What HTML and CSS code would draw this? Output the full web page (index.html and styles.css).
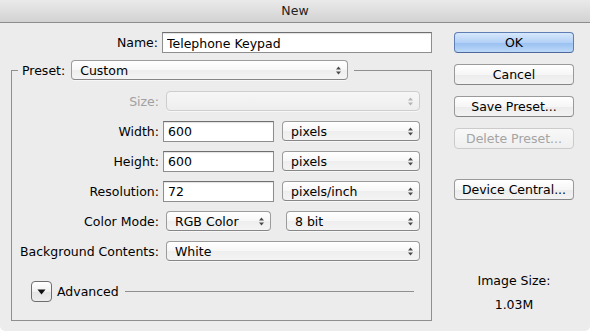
FILE: index.html
```html
<!DOCTYPE html>
<html lang="en">
<head>
    <meta charset="UTF-8">
    <title>New</title>
    <link rel="stylesheet" href="styles.css">
</head>
<body>
    <div class="window">
        <div class="titlebar">New</div>
        <div class="dialog">
            <div class="main">
                <div class="name-row">
                    <label class="label">Name:</label>
                    <input class="field name-field" type="text" value="Telephone Keypad">
                </div>

                <fieldset class="preset-box">
                    <legend class="preset-legend">
                        <span>Preset:</span>
                        <div class="popup preset-popup">Custom<svg class="arrows" width="7" height="9" viewBox="0 0 7 9"><path d="M3.5 0.5 L6 3.5 L1 3.5 Z M3.5 8.5 L6 5.5 L1 5.5 Z"/></svg></div>
                    </legend>

                    <div class="row">
                        <span class="label muted">Size:</span>
                        <div class="popup wide disabled"><svg class="arrows" width="7" height="9" viewBox="0 0 7 9"><path d="M3.5 0.5 L6 3.5 L1 3.5 Z M3.5 8.5 L6 5.5 L1 5.5 Z"/></svg></div>
                    </div>
                    <div class="row">
                        <span class="label">Width:</span>
                        <input class="field num-field" type="text" value="600">
                        <div class="popup unit">pixels<svg class="arrows" width="7" height="9" viewBox="0 0 7 9"><path d="M3.5 0.5 L6 3.5 L1 3.5 Z M3.5 8.5 L6 5.5 L1 5.5 Z"/></svg></div>
                    </div>
                    <div class="row">
                        <span class="label">Height:</span>
                        <input class="field num-field" type="text" value="600">
                        <div class="popup unit">pixels<svg class="arrows" width="7" height="9" viewBox="0 0 7 9"><path d="M3.5 0.5 L6 3.5 L1 3.5 Z M3.5 8.5 L6 5.5 L1 5.5 Z"/></svg></div>
                    </div>
                    <div class="row">
                        <span class="label">Resolution:</span>
                        <input class="field num-field" type="text" value="72">
                        <div class="popup unit">pixels/inch<svg class="arrows" width="7" height="9" viewBox="0 0 7 9"><path d="M3.5 0.5 L6 3.5 L1 3.5 Z M3.5 8.5 L6 5.5 L1 5.5 Z"/></svg></div>
                    </div>
                    <div class="row row-mode">
                        <span class="label">Color Mode:</span>
                        <div class="popup mode">RGB Color<svg class="arrows" width="7" height="9" viewBox="0 0 7 9"><path d="M3.5 0.5 L6 3.5 L1 3.5 Z M3.5 8.5 L6 5.5 L1 5.5 Z"/></svg></div>
                        <div class="popup depth">8 bit<svg class="arrows" width="7" height="9" viewBox="0 0 7 9"><path d="M3.5 0.5 L6 3.5 L1 3.5 Z M3.5 8.5 L6 5.5 L1 5.5 Z"/></svg></div>
                    </div>
                    <div class="row">
                        <span class="label">Background Contents:</span>
                        <div class="popup wide">White<svg class="arrows" width="7" height="9" viewBox="0 0 7 9"><path d="M3.5 0.5 L6 3.5 L1 3.5 Z M3.5 8.5 L6 5.5 L1 5.5 Z"/></svg></div>
                    </div>

                    <!-- Advanced disclosure -->
                    <div class="advanced">
                        <div class="disclosure"><svg width="9" height="6" viewBox="0 0 9 6"><path d="M0.5 0.5 L8.5 0.5 L4.5 5.5 Z"/></svg></div>
                        <span>Advanced</span>
                        <div class="rule"></div>
                    </div>
                </fieldset>
            </div>

            <div class="side">
                <button class="btn btn-default">OK</button>
                <button class="btn">Cancel</button>
                <button class="btn">Save Preset...</button>
                <button class="btn" disabled>Delete Preset...</button>
                <button class="btn btn-central">Device Central...</button>
                <div class="image-size">
                    <div>Image Size:</div>
                    <div class="size-value">1.03M</div>
                </div>
            </div>
        </div>
    </div>
</body>
</html>
```

FILE: styles.css
```css
body {
    margin: 0;
    padding: 0;
    background-color: #ffffff;
    font-family: "DejaVu Sans", sans-serif;
    font-size: 12.5px;
    color: #000000;
}

.window {
    width: 590px;
    height: 331px;
    background-color: #ececec;
    border-radius: 0 0 5px 5px;
    overflow: hidden;
}

.titlebar {
    height: 22px;
    line-height: 22px;
    text-align: center;
    font-size: 12.5px;
    color: #222222;
    background: linear-gradient(#eaeaea, #d2d2d2);
    border-bottom: 1px solid #8c8c8c;
}

.dialog {
    display: flex;
    padding-top: 9px;
}

.main {
    margin-left: 11px;
    width: 421px;
}

.name-row {
    display: flex;
    align-items: center;
    height: 21px;
}

.label {
    width: 147px;
    flex-shrink: 0;
    text-align: right;
    white-space: nowrap;
}

.muted {
    color: #a0a0a0;
}

.field {
    box-sizing: border-box;
    height: 21px;
    margin: 0 0 0 4px;
    padding: 1px 4px 0;
    border: 1px solid #8e8e8e;
    border-top-color: #6f6f6f;
    box-shadow: inset 0 1px 1px rgba(0, 0, 0, 0.12);
    background-color: #ffffff;
    font-family: "DejaVu Sans", sans-serif;
    font-size: 12.5px;
    color: #000000;
    outline: none;
}

.name-field {
    width: 270px;
}

.num-field {
    width: 111px;
}

/* Fieldset with the preset popup sitting on its top line */
.preset-box {
    margin: 7px 0 0;
    padding: 11px 11px 18px 0;
    border: 1px solid #8f8f8f;
    min-width: 0;
}

.preset-legend {
    display: flex;
    align-items: center;
    margin-left: 6px;
    padding: 0 6px 0 4px;
    height: 20px;
}

.preset-legend span {
    margin-right: 6px;
}

.popup {
    position: relative;
    box-sizing: border-box;
    display: flex;
    align-items: center;
    height: 20px;
    padding-left: 8px;
    border: 1px solid #9c9c9c;
    border-bottom-color: #868686;
    border-radius: 4px;
    background: linear-gradient(#ffffff, #f7f7f7 50%, #eeeeee 51%, #f4f4f4);
    box-shadow: 0 1px 0 rgba(255, 255, 255, 0.6);
    white-space: nowrap;
}

.popup .arrows {
    position: absolute;
    right: 5px;
    top: 5px;
    fill: #4a4a4a;
}

.popup.disabled {
    border-color: #cdcdcd;
    background: linear-gradient(#f6f6f6, #eeeeee);
}

.popup.disabled .arrows {
    fill: #b4b4b4;
}

.preset-popup {
    width: 277px;
}

.row {
    display: flex;
    align-items: center;
    height: 20px;
    margin-bottom: 10px;
}

.row-mode {
    margin-top: 1px;
}

.wide {
    width: 254px;
    margin-left: 7px;
}

.unit {
    width: 138px;
    margin-left: 8px;
}

.mode {
    width: 105px;
    margin-left: 7px;
}

.depth {
    width: 134px;
    margin-left: 15px;
}

.advanced {
    display: flex;
    align-items: center;
    height: 21px;
    margin-top: 20px;
    padding-left: 19px;
}

.disclosure {
    box-sizing: border-box;
    width: 21px;
    height: 21px;
    display: flex;
    align-items: center;
    justify-content: center;
    border: 1px solid #6e6e6e;
    border-radius: 4px;
    background: linear-gradient(#ffffff, #f1f1f1 50%, #e4e4e4 51%, #ededed);
}

.disclosure svg {
    fill: #111111;
    margin-top: 1px;
}

.advanced span {
    margin-left: 5px;
}

.rule {
    flex: 1;
    height: 1px;
    margin: 0 6px 0 6px;
    background-color: #8f8f8f;
}

.side {
    display: flex;
    flex-direction: column;
    margin-left: 22px;
    width: 120px;
}

.btn {
    box-sizing: border-box;
    width: 120px;
    height: 21px;
    margin: 0 0 11px;
    padding: 0;
    border: 1px solid #9a9a9a;
    border-bottom-color: #858585;
    border-radius: 4px;
    background: linear-gradient(#ffffff, #f6f6f6 50%, #ececec 51%, #f3f3f3);
    font-family: "DejaVu Sans", sans-serif;
    font-size: 12.5px;
    color: #000000;
}

.btn:disabled {
    color: #a4a4a4;
    border-color: #cbcbcb;
    background: linear-gradient(#f8f8f8, #efefef);
}

.btn-default {
    border-color: #5f7fb4;
    border-bottom-color: #4e6a9c;
    background: linear-gradient(#d7e8fc, #b3d1f6 50%, #98c0f1 51%, #bcd8f8);
}

.btn-central {
    margin-top: 19px;
}

.image-size {
    margin-top: 62px;
    text-align: center;
    line-height: 15px;
}

.size-value {
    margin-top: 9px;
}
```
